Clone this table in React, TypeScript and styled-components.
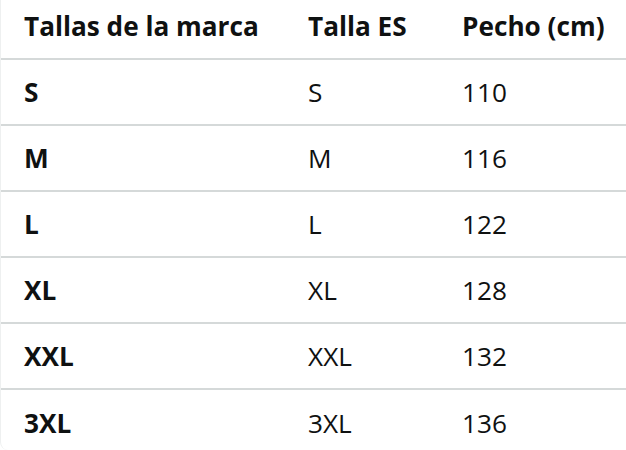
import React from "react";
import styled, { createGlobalStyle } from "styled-components";

const Global = createGlobalStyle`
  html, body { margin: 0; padding: 0; background: #fff; }
  body { font-family: "Open Sans", "Noto Sans", sans-serif; color: #0f1111; }
`;

const Frame = styled.div`
  width: 626px;
  height: 450px;
  box-sizing: border-box;
  border-left: 1px solid #eef0f0;
  border-bottom-left-radius: 8px;
  overflow: hidden;
`;

const Grid = styled.div`
  display: grid;
  grid-template-columns: 284px 154px 1fr;
`;

const Cell = styled.div<{ $head?: boolean; $bold?: boolean; $last?: boolean }>`
  box-sizing: border-box;
  padding-left: 23px;
  height: ${(p) => (p.$head ? 60 : 66)}px;
  display: flex;
  align-items: center;
  padding-bottom: ${(p) => (p.$head ? 6 : 0)}px;
  font-size: 26.2px;
  font-weight: ${(p) => (p.$bold ? 700 : 400)};
  white-space: nowrap;
  border-bottom: ${(p) => (p.$last ? "none" : "2px solid #d5d9d9")};
`;

const headers = ["Tallas de la marca", "Talla ES", "Pecho (cm)"];
const rows: [string, string, string][] = [
  ["S", "S", "110"],
  ["M", "M", "116"],
  ["L", "L", "122"],
  ["XL", "XL", "128"],
  ["XXL", "XXL", "132"],
  ["3XL", "3XL", "136"],
];

export default function App() {
  return (
    <>
      <Global />
      <Frame>
        <Grid>
          {headers.map((h) => (
            <Cell key={h} $head $bold>
              {h}
            </Cell>
          ))}
          {rows.map((r, i) =>
            r.map((c, j) => (
              <Cell key={`${i}-${j}`} $bold={j === 0} $last={i === rows.length - 1}>
                {c}
              </Cell>
            ))
          )}
        </Grid>
      </Frame>
    </>
  );
}
